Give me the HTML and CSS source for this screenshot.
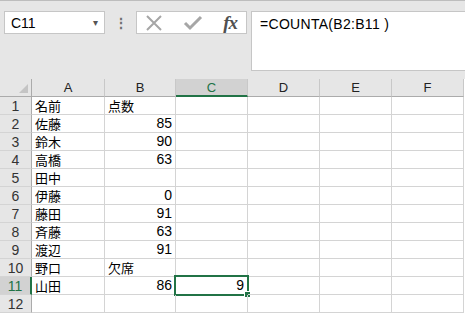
FILE: index.html
```html
<!DOCTYPE html>
<html lang="ja">
<head>
    <meta charset="UTF-8">
    <meta name="viewport" content="width=device-width, initial-scale=1.0">
    <title>COUNTA</title>
    <link rel="stylesheet" href="styles.css">
</head>
<body>
    <div class="toolbar">
        <div class="name-box">
            <span>C11</span>
            <span class="drop">&#9662;</span>
        </div>
        <div class="grip">&#8942;</div>
        <div class="fx-buttons">
            <svg width="18" height="18" viewBox="0 0 18 18"><path d="M2 2 L16 16 M16 2 L2 16" stroke="#a6a6a6" stroke-width="2" fill="none"/></svg>
            <svg width="20" height="18" viewBox="0 0 20 18"><path d="M2 9 L7 14 L18 3" stroke="#a6a6a6" stroke-width="3" fill="none"/></svg>
            <span class="fx">fx</span>
        </div>
        <div class="formula">=COUNTA(B2:B11 )</div>
    </div>

    <div class="sheet">
        <div class="corner"></div>
        <div class="col-head">A</div>
        <div class="col-head">B</div>
        <div class="col-head active">C</div>
        <div class="col-head">D</div>
        <div class="col-head">E</div>
        <div class="col-head">F</div>

        <div class="row-head">1</div><div class="cell">名前</div><div class="cell">点数</div><div class="cell"></div><div class="cell"></div><div class="cell"></div><div class="cell"></div>
        <div class="row-head">2</div><div class="cell">佐藤</div><div class="cell num">85</div><div class="cell"></div><div class="cell"></div><div class="cell"></div><div class="cell"></div>
        <div class="row-head">3</div><div class="cell">鈴木</div><div class="cell num">90</div><div class="cell"></div><div class="cell"></div><div class="cell"></div><div class="cell"></div>
        <div class="row-head">4</div><div class="cell">高橋</div><div class="cell num">63</div><div class="cell"></div><div class="cell"></div><div class="cell"></div><div class="cell"></div>
        <div class="row-head">5</div><div class="cell">田中</div><div class="cell"></div><div class="cell"></div><div class="cell"></div><div class="cell"></div><div class="cell"></div>
        <div class="row-head">6</div><div class="cell">伊藤</div><div class="cell num">0</div><div class="cell"></div><div class="cell"></div><div class="cell"></div><div class="cell"></div>
        <div class="row-head">7</div><div class="cell">藤田</div><div class="cell num">91</div><div class="cell"></div><div class="cell"></div><div class="cell"></div><div class="cell"></div>
        <div class="row-head">8</div><div class="cell">斉藤</div><div class="cell num">63</div><div class="cell"></div><div class="cell"></div><div class="cell"></div><div class="cell"></div>
        <div class="row-head">9</div><div class="cell">渡辺</div><div class="cell num">91</div><div class="cell"></div><div class="cell"></div><div class="cell"></div><div class="cell"></div>
        <div class="row-head">10</div><div class="cell">野口</div><div class="cell">欠席</div><div class="cell"></div><div class="cell"></div><div class="cell"></div><div class="cell"></div>
        <div class="row-head active">11</div><div class="cell">山田</div><div class="cell num">86</div><div class="cell num selected">9<span class="handle"></span></div><div class="cell"></div><div class="cell"></div><div class="cell"></div>
        <div class="row-head">12</div><div class="cell"></div><div class="cell"></div><div class="cell"></div><div class="cell"></div><div class="cell"></div><div class="cell"></div>
    </div>
</body>
</html>
```

FILE: styles.css
```css
body {
    margin: 0;
    padding: 0;
    background-color: #ffffff;
    font-family: "Noto Sans CJK JP", "Liberation Sans", sans-serif;
    color: #000;
    overflow: hidden;
}

.toolbar {
    display: flex;
    align-items: flex-start;
    height: 79px;
    box-sizing: border-box;
    padding-top: 10px;
    padding-left: 4px;
    background-color: #e6e6e6;
    border-top: 1px solid #bdbdbd;
}

.name-box {
    width: 101px;
    height: 23px;
    box-sizing: border-box;
    display: flex;
    align-items: center;
    justify-content: space-between;
    padding: 0 6px 0 6px;
    background-color: #fff;
    border: 1px solid #c6c6c6;
    font-family: "Liberation Sans", sans-serif;
    font-size: 14px;
}

.drop {
    font-size: 10px;
    color: #555;
}

.grip {
    width: 31px;
    height: 23px;
    line-height: 23px;
    text-align: center;
    color: #6e6e6e;
    font-size: 14px;
    font-weight: bold;
}

.fx-buttons {
    width: 111px;
    height: 23px;
    box-sizing: border-box;
    display: flex;
    align-items: center;
    justify-content: space-between;
    padding: 0 9px 0 8px;
    background-color: #fff;
    border: 1px solid #c6c6c6;
}

.fx {
    font-family: "Liberation Serif", serif;
    font-style: italic;
    font-weight: bold;
    font-size: 19px;
    color: #505050;
    letter-spacing: -1px;
    line-height: 20px;
}

.formula {
    flex: 1;
    height: 60px;
    margin-left: 4px;
    box-sizing: border-box;
    padding: 4px 0 0 8px;
    background-color: #fff;
    border: 1px solid #c6c6c6;
    border-right: none;
    font-family: "Liberation Sans", sans-serif;
    font-size: 14px;
    letter-spacing: 0.3px;
}

.sheet {
    display: grid;
    grid-template-columns: 32px 73px 71px 72px 72px 72px 72px;
    grid-auto-rows: 18px;
    font-size: 13px;
}

.corner {
    position: relative;
    background-color: #e6e6e6;
    border-right: 1px solid #ababab;
    border-bottom: 1px solid #ababab;
}

.corner::after {
    content: "";
    position: absolute;
    right: 3px;
    bottom: 3px;
    border-left: 9px solid transparent;
    border-bottom: 9px solid #c4c4c4;
}

.col-head {
    background-color: #e6e6e6;
    border-right: 1px solid #c8c8c8;
    border-bottom: 1px solid #ababab;
    text-align: center;
    line-height: 17px;
    font-family: "Liberation Sans", sans-serif;
    font-size: 13px;
    color: #222;
}

.col-head.active {
    background-color: #d2d2d2;
    color: #217346;
    border-bottom: 2px solid #217346;
}

.row-head {
    background-color: #e6e6e6;
    border-right: 1px solid #ababab;
    border-bottom: 1px solid #d4d4d4;
    text-align: center;
    line-height: 18px;
    font-family: "Liberation Sans", sans-serif;
    font-size: 14px;
    color: #333;
}

.row-head.active {
    background-color: #d2d2d2;
    color: #217346;
    border-right: 2px solid #217346;
}

.cell {
    position: relative;
    box-sizing: border-box;
    border-right: 1px solid #d4d4d4;
    border-bottom: 1px solid #d4d4d4;
    padding: 0 3px;
    line-height: 17px;
    white-space: nowrap;
}

.num {
    text-align: right;
    font-family: "Liberation Sans", sans-serif;
    font-size: 14px;
}

.selected::before {
    content: "";
    position: absolute;
    left: -2px;
    top: -2px;
    right: -2px;
    bottom: -2px;
    border: 2px solid #217346;
}

.handle {
    position: absolute;
    right: -4px;
    bottom: -4px;
    width: 5px;
    height: 5px;
    background-color: #217346;
    border: 1px solid #fff;
}
```
